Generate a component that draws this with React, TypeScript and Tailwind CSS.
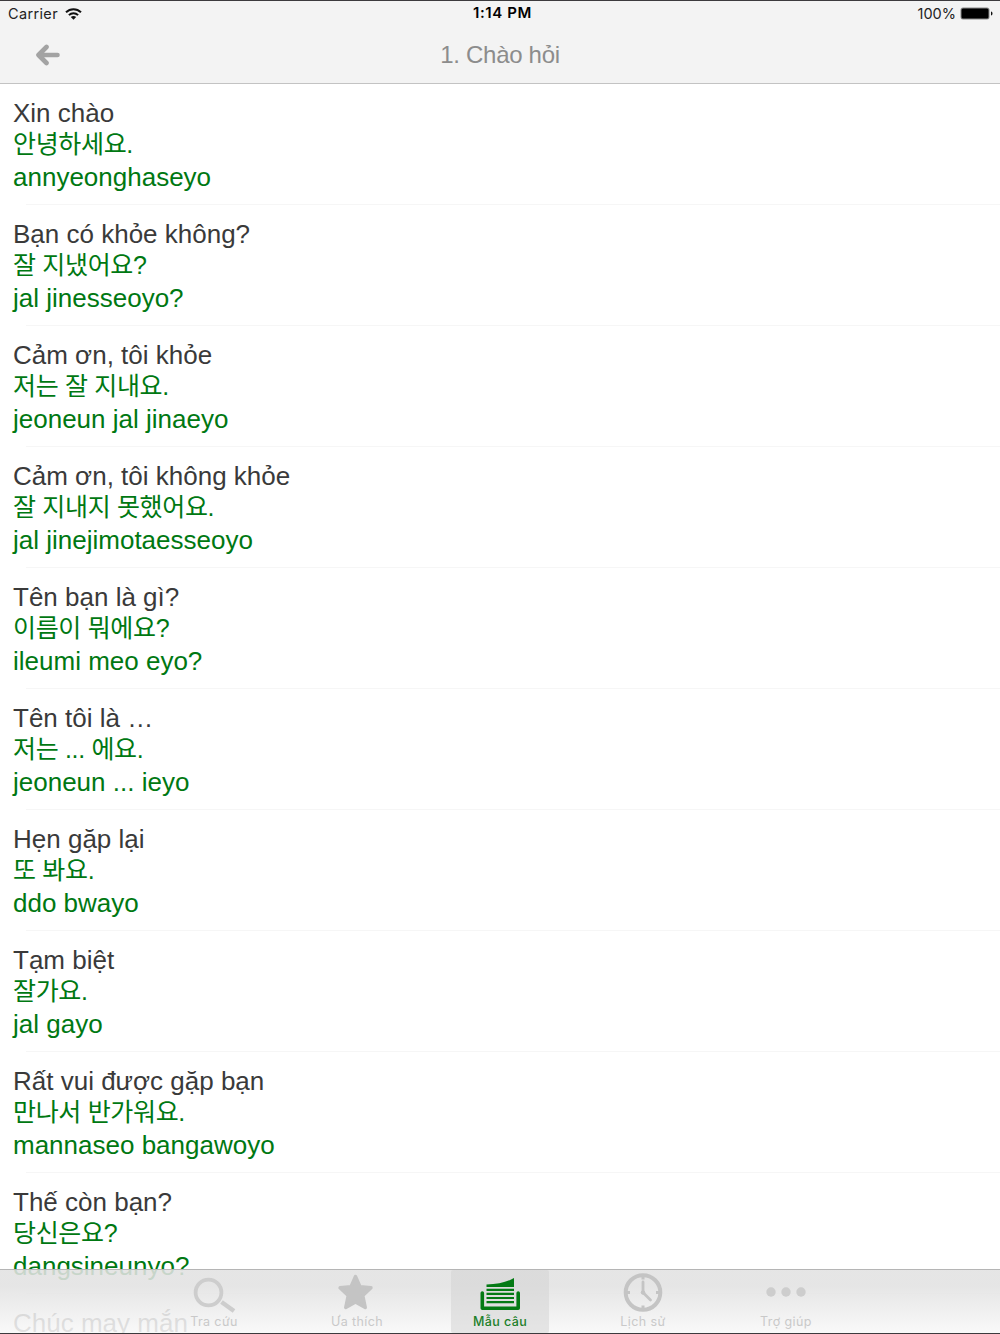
import type { ReactNode } from "react";
import clsx from "clsx";

const phrases = [
  { vi: "Xin chào", ko: "안녕하세요.", roman: "annyeonghaseyo" },
  { vi: "Bạn có khỏe không?", ko: "잘 지냈어요?", roman: "jal jinesseoyo?" },
  { vi: "Cảm ơn, tôi khỏe", ko: "저는 잘 지내요.", roman: "jeoneun jal jinaeyo" },
  {
    vi: "Cảm ơn, tôi không khỏe",
    ko: "잘 지내지 못했어요.",
    roman: "jal jinejimotaesseoyo",
  },
  { vi: "Tên bạn là gì?", ko: "이름이 뭐에요?", roman: "ileumi meo eyo?" },
  { vi: "Tên tôi là …", ko: "저는 ... 에요.", roman: "jeoneun ... ieyo" },
  { vi: "Hẹn gặp lại", ko: "또 봐요.", roman: "ddo bwayo" },
  { vi: "Tạm biệt", ko: "잘가요.", roman: "jal gayo" },
  { vi: "Rất vui được gặp bạn", ko: "만나서 반가워요.", roman: "mannaseo bangawoyo" },
  { vi: "Thế còn bạn?", ko: "당신은요?", roman: "dangsineunyo?" },
  { vi: "Chúc may mắn", ko: "", roman: "" },
];

const SearchIcon = () => (
  <svg width="44" height="40" viewBox="0 0 44 40" fill="none" stroke="#cdcdcd">
    <circle cx="16.5" cy="19.5" r="12.9" strokeWidth="3.8" />
    <path d="M29.5 29 42 38" strokeWidth="4.4" />
  </svg>
);

const StarIcon = () => (
  <svg width="44" height="40" viewBox="0 0 44 40">
    <path
      d="M20.5 3.5 25 13.6 36 14.8 27.8 22.6 30.3 34.5 20.5 29 10.7 34.5 13.2 22.6 5 14.8 16 13.6Z"
      fill="#c4c4c4"
      stroke="#c4c4c4"
      strokeWidth="3.4"
      strokeLinejoin="round"
    />
  </svg>
);

const PagesIcon = () => (
  <svg width="44" height="40" viewBox="0 0 44 40" fill="#047a14">
    <path d="M8.5 14V11.5C20 11 28.5 9.5 36 5V14Z" />
    <path d="M8.5 15.7h27.5v2.2h-27.5zM8.5 19.8h27.5v2.2h-27.5zM8.5 23.9h27.5v2.2h-27.5zM8.5 28h27.5v2.2h-27.5z" />
    <path
      d="M4.3 20V35.3H40.2V20"
      fill="none"
      stroke="#047a14"
      strokeWidth="3.6"
      strokeLinecap="round"
      strokeLinejoin="round"
    />
  </svg>
);

const ClockIcon = () => (
  <svg width="44" height="40" viewBox="0 0 44 40" fill="none" stroke="#c4c4c4">
    <circle cx="22" cy="19.5" r="17.3" strokeWidth="4" />
    <path d="M22 3.5v3M22 32.5v3M6 19.5h3M35 19.5h3" strokeWidth="3" />
    <path d="M22 9V19.5L29.5 27" strokeWidth="2.8" strokeLinecap="round" strokeLinejoin="round" />
    <circle cx="22" cy="19.5" r="1.8" fill="#c4c4c4" />
  </svg>
);

const MoreIcon = () => (
  <svg width="44" height="40" viewBox="0 0 44 40" fill="#cdcdcd">
    <circle cx="7" cy="19" r="4.7" />
    <circle cx="22" cy="19" r="4.7" />
    <circle cx="37" cy="19" r="4.7" />
  </svg>
);

const tabs: { label: string; icon: ReactNode; active?: boolean }[] = [
  { label: "Tra cứu", icon: <SearchIcon /> },
  { label: "Ưa thích", icon: <StarIcon /> },
  { label: "Mẫu câu", icon: <PagesIcon />, active: true },
  { label: "Lịch sử", icon: <ClockIcon /> },
  { label: "Trợ giúp", icon: <MoreIcon /> },
];

function StatusBar() {
  return (
    <div className="grid h-[25px] grid-cols-3 items-center pl-2 pr-[7px] font-[Inter,sans-serif] text-[14.5px] text-[#222]">
      <div className="flex items-center gap-[7px] tracking-[0.35px]">
        Carrier
        <svg width="17" height="12" viewBox="0 0 17 12" fill="none" stroke="#111" strokeWidth="2">
          <path d="M1 4.3C5.2 0.2 11.8 0.2 16 4.3" />
          <path d="M3.9 7.1C6.5 4.6 10.5 4.6 13.1 7.1" />
          <path d="M8.5 11.7 5.8 9C7.4 7.6 9.6 7.6 11.2 9Z" fill="#111" stroke="none" />
        </svg>
      </div>
      <div className="pl-1 text-center text-[15px] font-semibold tracking-[0.6px] text-black">1:14 PM</div>
      <div className="flex items-center justify-end gap-1">
        100%
        <svg width="33" height="13" viewBox="0 0 33 13">
          <rect x="0.5" y="0.5" width="29" height="12" rx="2.5" fill="#8a8a8a" />
          <rect x="1.5" y="1.5" width="27" height="10" rx="1.5" fill="#000" />
          <path d="M31 4.5c2 .6 2 3.4 0 4z" fill="#111" />
        </svg>
      </div>
    </div>
  );
}

export default function App() {
  return (
    <div className="relative flex h-[1334px] w-[1000px] flex-col overflow-hidden border-y border-[#3c3a3d] bg-white font-['Liberation_Sans','Noto_Sans_CJK_KR',sans-serif]">
      <header className="h-[83px] shrink-0 border-b border-[#c3c3c3] bg-[#f3f3f3]">
        <StatusBar />
        <div className="grid h-[57px] grid-cols-[100px_1fr_100px] items-center">
          <svg className="ml-[35px]" width="26" height="22" viewBox="0 0 26 22" fill="none">
            <path
              d="M11.5 3 3.5 11 11.5 19M4.5 11H22.5"
              stroke="#a3a3a3"
              strokeWidth="4.6"
              strokeLinecap="round"
              strokeLinejoin="round"
            />
          </svg>
          <h1 className="text-center text-[24px] tracking-[-0.3px] text-[#8c8c8c]">1. Chào hỏi</h1>
        </div>
      </header>

      <ul className="min-h-0 flex-1 overflow-hidden">
        {phrases.map((phrase) => (
          <li key={phrase.vi} className="flex h-[121px] flex-col">
            <div className="flex-1 pl-[13px] pt-3.5 text-[26px] text-[#007812]">
              <p className="h-[31px] leading-[31px] text-[#3a3a3a]">{phrase.vi}</p>
              <p className="h-[31px] text-[25px] leading-[31px] tracking-[-0.33px]">{phrase.ko}</p>
              <p className="h-[35px] leading-[35px]">{phrase.roman}</p>
            </div>
            <div className="ml-[26px] h-px bg-[#f6f6f6]" />
          </li>
        ))}
      </ul>

      <nav className="absolute inset-x-0 bottom-0 flex h-16 justify-center gap-[45px] border-t border-[#b5b5b5] bg-linear-to-b from-[#e2e2e2]/88 from-25% to-[#f8f8f8]/88">
        {tabs.map((tab) => (
          <button
            key={tab.label}
            className={clsx(
              "flex w-[98px] flex-col items-center pt-[3px] font-[Inter,sans-serif] text-[12.5px]",
              tab.active
                ? "rounded-xs bg-[#d2d2d2]/50 font-medium text-[#1c7f29]"
                : "text-[#c9c9c9]",
            )}
          >
            {tab.icon}
            <span className="mt-px leading-4 tracking-[0.4px]">{tab.label}</span>
          </button>
        ))}
      </nav>
    </div>
  );
}
